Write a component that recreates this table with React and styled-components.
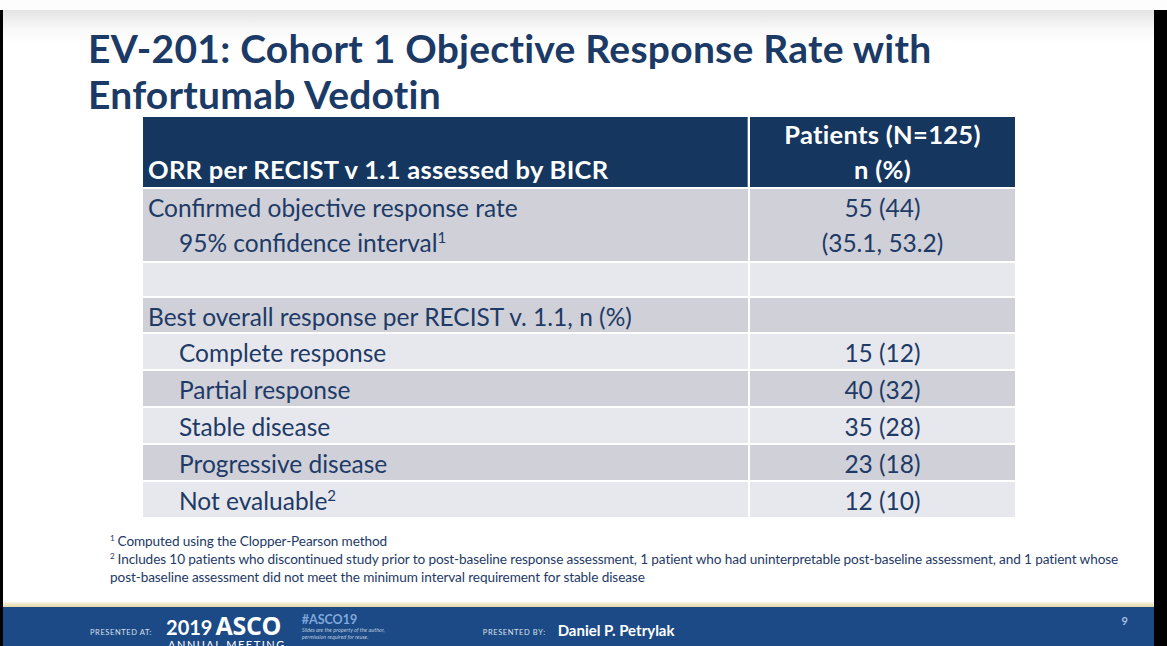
import React from "react";
import styled, { createGlobalStyle } from "styled-components";

const Global = createGlobalStyle`
  html, body { margin: 0; padding: 0; background: #fff; }
  body { font-family: Lato, "Open Sans", sans-serif; }
`;

const Page = styled.div`
  width: 1167px;
  height: 646px;
  display: flex;
  flex-direction: column;
  overflow: hidden;
  background: #fff;
`;

const TopStrip = styled.div`
  height: 10px;
  background: #fdfdfd;
`;

const Frame = styled.div`
  flex: 1;
  display: flex;
  min-height: 0;
`;

const Edge = styled.div`
  width: ${(p) => p.w}px;
  background: #000;
`;

const Slide = styled.div`
  flex: 1;
  display: flex;
  flex-direction: column;
  background: linear-gradient(#e4e4e4 0px, #f7f7f7 18px, #ffffff 34px);
  min-width: 0;
`;

const Title = styled.h1`
  margin: 0;
  padding: 15px 0 0 85px;
  font-family: Lato, "Open Sans", sans-serif;
  font-weight: 700;
  font-size: 39px;
  line-height: 46px;
  color: #1b3a66;
  letter-spacing: 0.25px;
  white-space: nowrap;
`;

const Grid = styled.div`
  margin-left: 140px;
  width: 872px;
  display: grid;
  grid-template-columns: 605px 265px;
  column-gap: 2px;
  row-gap: 2px;
  background: #fff;
`;

const HeadCell = styled.div`
  background: #14365f;
  color: #fff;
  font-weight: 700;
  font-size: 25.5px;
  letter-spacing: 0.3px;
  line-height: 35px;
  height: 70px;
  display: flex;
  flex-direction: column;
  justify-content: flex-end;
  align-items: ${(p) => (p.center ? "center" : "flex-start")};
  padding-left: ${(p) => (p.center ? 0 : 5)}px;
  box-sizing: border-box;
  border-right: ${(p) => (p.center ? "none" : "1px solid #5a7aa6")};
  white-space: nowrap;
`;

const Cell = styled.div`
  background: ${(p) => (p.dark ? "#cfd0d8" : "#e7e8ed")};
  color: #1e3a66;
  font-size: 24.5px;
  line-height: 35px;
  height: ${(p) => p.h}px;
  display: flex;
  flex-direction: column;
  align-items: ${(p) => (p.center ? "center" : "flex-start")};
  padding-left: ${(p) => (p.center ? 0 : 5)}px;
  padding-top: 1px;
  box-sizing: border-box;
  white-space: nowrap;
`;

const Indent = styled.span`
  padding-left: ${(p) => (p.on ? 31 : 0)}px;
`;

const Sup = styled.sup`
  font-size: 15px;
  line-height: 0;
  vertical-align: 9px;
`;

const Notes = styled.div`
  padding: 15px 0 0 107px;
  color: #1e3a66;
  font-size: 13.6px;
  line-height: 18px;
  width: 1020px;
  letter-spacing: -0.1px;
`;

const Note = styled.div`
  line-height: 18px;
`;

const NoteSup = styled.sup`
  font-size: 8px;
  line-height: 0;
  vertical-align: 5px;
  margin-right: 3px;
`;

const Spacer = styled.div`
  flex: 1;
`;

const Rule = styled.div`
  height: 5px;
  background: linear-gradient(#f8f5e6, #e2d8a6);
`;

const Footer = styled.div`
  height: 39px;
  background: #1c4a86;
  display: flex;
  align-items: flex-start;
  padding-left: 87px;
  overflow: hidden;
  color: #fff;
`;

const Tiny = styled.div`
  margin-top: ${(p) => p.top}px;
  margin-left: ${(p) => p.left || 0}px;
  font-size: 7.5px;
  letter-spacing: 0.6px;
  color: #d8e0ec;
  white-space: nowrap;
`;

const Asco = styled.div`
  margin-left: 14px;
  margin-top: 6px;
  display: flex;
  flex-direction: column;
  line-height: 1;
`;

const AscoTop = styled.div`
  display: flex;
  align-items: baseline;
  gap: 3px;
  font-weight: 700;
  height: 26px;
`;

const Year = styled.span`
  font-size: 20px;
`;

const AscoWord = styled.span`
  font-size: 25px;
  letter-spacing: -0.3px;
  font-family: "Open Sans", Lato, sans-serif;
`;

const AnnualMeeting = styled.span`
  font-size: 11px;
  letter-spacing: 1.5px;
  margin-left: 2px;
`;

const Hash = styled.div`
  margin-left: 16px;
  margin-top: 6px;
  display: flex;
  flex-direction: column;
`;

const HashTag = styled.span`
  color: #7fa8dc;
  font-size: 12.5px;
  font-weight: 700;
  line-height: 14px;
`;

const Disclaimer = styled.span`
  font-size: 5.5px;
  font-style: italic;
  color: #b9c7dc;
  line-height: 7px;
`;

const Name = styled.div`
  margin-left: 12px;
  margin-top: 14px;
  font-size: 15px;
  font-weight: 700;
  white-space: nowrap;
`;

const PageNo = styled.div`
  margin-left: auto;
  margin-right: 26px;
  margin-top: 7px;
  font-size: 11px;
  font-weight: 700;
  color: #a9bde0;
`;

const rows = [
  { label: "Confirmed objective response rate", value: "55 (44)", dark: true, h: 72,
    sub: { label: "95% confidence interval", sup: "1", value: "(35.1, 53.2)" } },
  { label: "", value: "", dark: false, h: 33 },
  { label: "Best overall response per RECIST v. 1.1, n (%)", value: "", dark: true, h: 34 },
  { label: "Complete response", value: "15 (12)", dark: false, h: 35, indent: true },
  { label: "Partial response", value: "40 (32)", dark: true, h: 35, indent: true },
  { label: "Stable disease", value: "35 (28)", dark: false, h: 35, indent: true },
  { label: "Progressive disease", value: "23 (18)", dark: true, h: 35, indent: true },
  { label: "Not evaluable", sup: "2", value: "12 (10)", dark: false, h: 35, indent: true },
];

export default function App() {
  return (
    <Page>
      <Global />
      <TopStrip />
      <Frame>
        <Edge w={3} />
        <Slide>
          <Title>
            EV-201: Cohort 1 Objective Response Rate with
            <br />
            Enfortumab Vedotin
          </Title>
          <Grid>
            <HeadCell>ORR per RECIST v 1.1 assessed by BICR</HeadCell>
            <HeadCell center>
              <span>Patients (N=125)</span>
              <span>n (%)</span>
            </HeadCell>
            {rows.map((r, i) => (
              <React.Fragment key={i}>
                <Cell dark={r.dark} h={r.h}>
                  <Indent on={r.indent}>
                    {r.label}
                    {r.sup && <Sup>{r.sup}</Sup>}
                  </Indent>
                  {r.sub && (
                    <Indent on>
                      {r.sub.label}
                      <Sup>{r.sub.sup}</Sup>
                    </Indent>
                  )}
                </Cell>
                <Cell dark={r.dark} h={r.h} center>
                  <span>{r.value}</span>
                  {r.sub && <span>{r.sub.value}</span>}
                </Cell>
              </React.Fragment>
            ))}
          </Grid>
          <Notes>
            <Note>
              <NoteSup>1</NoteSup>Computed using the Clopper-Pearson method
            </Note>
            <Note>
              <NoteSup>2</NoteSup>Includes 10 patients who discontinued study prior to
              post-baseline response assessment, 1 patient who had uninterpretable
              post-baseline assessment, and 1 patient whose post-baseline assessment did
              not meet the minimum interval requirement for stable disease
            </Note>
          </Notes>
          <Spacer />
          <Rule />
          <Footer>
            <Tiny top={21}>PRESENTED AT:</Tiny>
            <Asco>
              <AscoTop>
                <Year>2019</Year>
                <AscoWord>ASCO</AscoWord>
              </AscoTop>
              <AnnualMeeting>ANNUAL MEETING</AnnualMeeting>
            </Asco>
            <Hash>
              <HashTag>#ASCO19</HashTag>
              <Disclaimer>Slides are the property of the author,</Disclaimer>
              <Disclaimer>permission required for reuse.</Disclaimer>
            </Hash>
            <Tiny top={21} left={98}>PRESENTED BY:</Tiny>
            <Name>Daniel P. Petrylak</Name>
            <PageNo>9</PageNo>
          </Footer>
        </Slide>
        <Edge w={13} />
      </Frame>
    </Page>
  );
}
